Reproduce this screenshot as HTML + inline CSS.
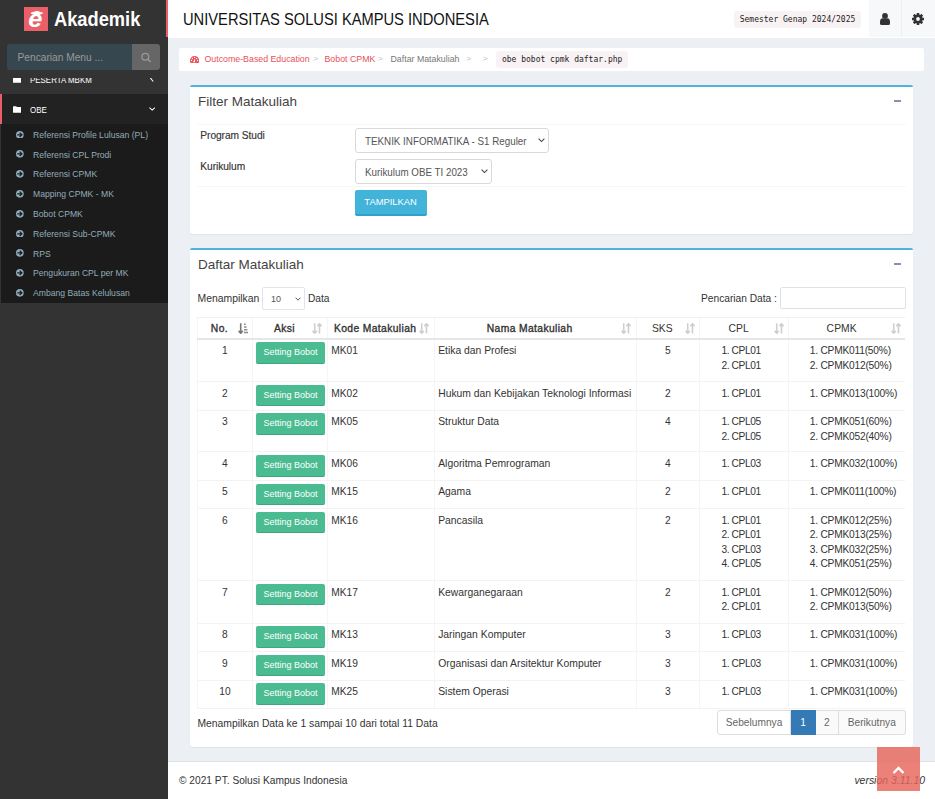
<!DOCTYPE html>
<html lang="id">
<head>
<meta charset="utf-8">
<title>Daftar Matakuliah</title>
<style>
*{box-sizing:border-box;margin:0;padding:0}
html,body{width:935px;height:799px;overflow:hidden}
body{font-family:"Liberation Sans",sans-serif;font-size:10.2px;color:#333;background:#ecf0f5;position:relative}
a{text-decoration:none;color:inherit}
/* sidebar */
#side{position:absolute;left:0;top:0;width:168px;height:799px;background:#333;overflow:hidden}
#logo{position:absolute;left:0;top:0;width:168px;height:37px;border-right:2px solid #e8606a}
#logo .sq{position:absolute;left:24px;top:6.5px}
#logo .nm{position:absolute;left:53.5px;top:6.2px;font-size:21px;font-weight:bold;color:#fff;line-height:26px;transform:scaleX(.87);transform-origin:0 0}
#srch{position:absolute;left:0;top:37px;width:168px;height:40.6px;background:#333;z-index:3}
#srch .in{position:absolute;left:7px;top:7px;width:125px;height:26px;background:#37474f;border-radius:3px 0 0 3px;color:#999;font-size:10.2px;line-height:28px;padding-left:10.5px}
#srch .bt{position:absolute;left:132px;top:7px;width:28px;height:26px;background:#666;border-radius:0 3px 3px 0}
#menu{position:absolute;left:0;top:64px;width:168px}
.mi{position:relative;height:30px;color:#fff;font-size:9px;line-height:32px;padding-left:30px;white-space:nowrap}
.mi span,.si span{display:inline-block;transform-origin:0 50%}
.mi span{transform:scaleX(.88)}
.mi .fo{position:absolute;left:12.7px;top:12px}
.mi .ch{position:absolute;left:149.5px;top:10.6px}
.mi.act .fo{left:10.7px}.mi.act .ch{left:146.8px;top:13.3px}
.mi.act{background:#222;border-left:2px solid #eb5f68;padding-left:28px}
.sub{background:#1b1b1b;padding:0.8px 0 0 0;height:179px;margin-left:1px}
.si{position:relative;height:19.8px;line-height:19.8px;color:#93acb8;font-size:9.8px;padding-left:31.5px;white-space:nowrap}
.si span{transform:scaleX(.88)}
.si .ar{position:absolute;left:15.2px;top:5.9px}
/* header */
#head{position:absolute;left:168px;top:0;width:767px;height:37.5px;background:#fff}
#head .tt{position:absolute;left:15px;top:0;line-height:39.8px;font-size:17px;transform:scaleX(.864);transform-origin:0 0;color:#111;white-space:nowrap}
#head .sem{position:absolute;left:566px;top:11px;width:127px;height:17px;background:#f9f2f4;border-radius:3px;font-family:"DejaVu Sans Mono","Liberation Mono",monospace;font-size:8px;line-height:18px;text-align:center;color:#222}
#head .c1{position:absolute;left:701px;top:0;width:33px;height:36.5px;background:#f7f8fa;border-right:1px solid #eef0f3}
#head .c2{position:absolute;left:734px;top:0;width:33px;height:36.5px;background:#f7f8fa}
#head .c1 svg{position:absolute;left:11px;top:13px}
#head .c2 svg{position:absolute;left:10px;top:12.9px}
/* breadcrumb */
#bc{position:absolute;left:179px;top:48px;width:745px;height:22.5px;background:#fff;border-radius:2px;font-size:8.8px;line-height:22px;white-space:nowrap}
#bc span{position:absolute;top:0}
#bc .r{color:#e8505b}#bc .g{color:#bbb;font-size:8px}#bc .k{color:#777}
#bc .db{position:absolute;left:10.9px;top:7.9px}
#bc code{position:absolute;left:317.3px;top:2.6px;width:131.7px;height:17px;background:#f9f2f4;border-radius:3px;font-family:"DejaVu Sans Mono","Liberation Mono",monospace;font-size:8px;line-height:17px;text-align:center;color:#222;white-space:pre}
/* panels */
.pn{position:absolute;left:190px;width:723px;background:#fff;border-radius:3px;box-shadow:0 1px 1px rgba(0,0,0,.06)}
.pn::before{content:"";position:absolute;left:0;right:0;top:0;height:2px;background:#4fb4dc;border-radius:3px 3px 0 0}
.pn h3{position:absolute;left:8px;top:8px;font-weight:normal;font-size:13.5px;line-height:18px;color:#444}
.pn .mn{position:absolute;right:11.6px;top:15.3px;width:7.4px;height:1.6px;background:#8790ad}
#p1{top:85px;height:149px}
#p2{top:248px;height:498.8px}
/* footer */
#foot{position:absolute;left:168px;top:761px;width:767px;height:38px;border-top:1px solid #dde1e8;background:#fff;font-size:10.2px;line-height:37px}

.ln{position:absolute;left:7px;right:7px;height:1px;background:#f7f7f7}
.lb{position:absolute;left:10.3px;font-size:10.2px;line-height:14px;color:#333;letter-spacing:-.05px;-webkit-text-stroke:.15px #333}
.lt{position:absolute;font-size:10.2px;line-height:21px;color:#333;white-space:nowrap}
.sel{position:absolute;height:24.6px;border:1px solid #d9d9d9;border-radius:3px;background:#fff;font-size:10.6px;line-height:24.4px;color:#555;padding-left:9.5px;white-space:nowrap}
.sel span{display:inline-block;transform:scaleX(.925);transform-origin:0 50%}
.sel .cv{position:absolute;right:3px;top:9.4px}
.sel.sm{height:23px;line-height:22px;font-size:9.7px;padding-left:7.5px;border-color:#e3e3ee;border-radius:2px}
.sel.sm .cv{top:8.6px;right:3px}
.inp{position:absolute;border:1px solid #dfe0ea;border-radius:2px;background:#fff}
.btn{position:absolute;width:72.2px;height:25.6px;background:#42b3d9;border-bottom:2px solid #2fa2c9;border-radius:2px;color:#fff;font-size:9.4px;line-height:24.6px;text-align:center}
#tb{position:absolute;left:6.7px;top:68.8px;width:708.5px;border-top:1px solid #f0f0f0}
.tr{display:flex;border-bottom:1px solid #f3f3f3}
.td{border-left:1px solid #f5f5f5;padding:4.5px 3.5px 0 3.5px;line-height:14.55px;font-size:10.2px;color:#333;white-space:nowrap;overflow:hidden;flex:none}
.tr .td:last-child{border-right:0}
.w1{width:55.5px}.w2{width:74.5px}.w3{width:107px}.w4{width:202px;font-size:10.35px}.w5{width:63.3px}.w6{width:89.2px}.w7{width:117px}
.td.c{text-align:center}
.td.b{padding:2.7px 0 0 2.8px}
.td.l1{padding-left:21.5px;letter-spacing:-.4px}
.td.l2{padding-left:20.5px;letter-spacing:-.2px}
.th{height:21.9px;border-bottom:2px solid #e6e6e6}
.th .td{position:relative;text-align:center;font-weight:normal;-webkit-text-stroke:.35px #333;color:#333;padding:4px 14px 0 3px;font-size:10.3px;letter-spacing:.38px}
.th .td.n{-webkit-text-stroke:0;letter-spacing:.1px}
.th .so{position:absolute;right:3.9px;top:4.9px;width:10.4px;height:11.4px}
.sb{display:block;width:69px;height:21.5px;background:#4bbb92;border-bottom:1.5px solid #3ca77f;border-radius:2px;color:#fff;font-size:9px;line-height:21px;text-align:center}
#pg{position:absolute;left:527px;top:462.2px;height:24.4px;width:189px;display:flex;font-size:10.2px;line-height:23.6px;color:#666;text-align:center}
#pg a{border:1px solid #ddd;border-left-width:0;height:24.4px;background:#fafafa}
#pg .p0{width:74px;border-left-width:1px;border-radius:3px 0 0 3px;background:#fff}
#pg .p1{width:25px;background:#337ab7;border-color:#337ab7;color:#fff}
#pg .p2{width:22.5px}
#pg .p3{width:67.5px;border-radius:0 3px 3px 0}
#foot .ver{position:absolute;right:10px;top:0;font-style:italic;color:#333;font-size:10.45px}
#top{position:absolute;left:877px;top:747.3px;width:43.2px;height:43.6px;background:rgba(231,101,92,.82);z-index:9}
#top svg{position:absolute;left:15.2px;top:18.6px}
</style>
</head>
<body>
<div id="side">
  <div id="menu">
    <div class="mi"><svg class="fo" viewBox="0 0 9 7" width="8.6" height="7"><path d="M0 0.7Q0 0 .7 0H3.2L4.2 1H8.3Q9 1 9 1.7V6.3Q9 7 8.3 7H.7Q0 7 0 6.3Z" fill="#fff"/></svg><span>PESERTA MBKM</span><svg class="ch" viewBox="0 0 4 7" width="4" height="7"><path d="M3.3 0.5L0.7 3.5L3.3 6.5" fill="none" stroke="#fff" stroke-width="1.1"/></svg></div>
    <div class="mi act"><svg class="fo" viewBox="0 0 9 7" width="8.6" height="7"><path d="M0 0.7Q0 0 .7 0H3.2L4.2 1H8.3Q9 1 9 1.7V6.3Q9 7 8.3 7H.7Q0 7 0 6.3Z" fill="#fff"/></svg><span>OBE</span><svg class="ch" viewBox="0 0 7 4" width="6.4" height="3.8"><path d="M0.5 0.6L3.5 3.3L6.5 0.6" fill="none" stroke="#fff" stroke-width="1.1"/></svg></div>
    <div class="sub">
      <div class="si"><svg class="ar" viewBox="0 0 8 8" width="7.7" height="7.7"><circle cx="4" cy="4" r="4" fill="#8fadbb"/><path d="M1.3 4H6M3.8 1.7L6.2 4L3.8 6.3" fill="none" stroke="#1b1b1b" stroke-width="1.25"/></svg><span>Referensi Profile Lulusan (PL)</span></div>
      <div class="si"><svg class="ar" viewBox="0 0 8 8" width="7.7" height="7.7"><circle cx="4" cy="4" r="4" fill="#8fadbb"/><path d="M1.3 4H6M3.8 1.7L6.2 4L3.8 6.3" fill="none" stroke="#1b1b1b" stroke-width="1.25"/></svg><span>Referensi CPL Prodi</span></div>
      <div class="si"><svg class="ar" viewBox="0 0 8 8" width="7.7" height="7.7"><circle cx="4" cy="4" r="4" fill="#8fadbb"/><path d="M1.3 4H6M3.8 1.7L6.2 4L3.8 6.3" fill="none" stroke="#1b1b1b" stroke-width="1.25"/></svg><span>Referensi CPMK</span></div>
      <div class="si"><svg class="ar" viewBox="0 0 8 8" width="7.7" height="7.7"><circle cx="4" cy="4" r="4" fill="#8fadbb"/><path d="M1.3 4H6M3.8 1.7L6.2 4L3.8 6.3" fill="none" stroke="#1b1b1b" stroke-width="1.25"/></svg><span>Mapping CPMK - MK</span></div>
      <div class="si"><svg class="ar" viewBox="0 0 8 8" width="7.7" height="7.7"><circle cx="4" cy="4" r="4" fill="#8fadbb"/><path d="M1.3 4H6M3.8 1.7L6.2 4L3.8 6.3" fill="none" stroke="#1b1b1b" stroke-width="1.25"/></svg><span>Bobot CPMK</span></div>
      <div class="si"><svg class="ar" viewBox="0 0 8 8" width="7.7" height="7.7"><circle cx="4" cy="4" r="4" fill="#8fadbb"/><path d="M1.3 4H6M3.8 1.7L6.2 4L3.8 6.3" fill="none" stroke="#1b1b1b" stroke-width="1.25"/></svg><span>Referensi Sub-CPMK</span></div>
      <div class="si"><svg class="ar" viewBox="0 0 8 8" width="7.7" height="7.7"><circle cx="4" cy="4" r="4" fill="#8fadbb"/><path d="M1.3 4H6M3.8 1.7L6.2 4L3.8 6.3" fill="none" stroke="#1b1b1b" stroke-width="1.25"/></svg><span>RPS</span></div>
      <div class="si"><svg class="ar" viewBox="0 0 8 8" width="7.7" height="7.7"><circle cx="4" cy="4" r="4" fill="#8fadbb"/><path d="M1.3 4H6M3.8 1.7L6.2 4L3.8 6.3" fill="none" stroke="#1b1b1b" stroke-width="1.25"/></svg><span>Pengukuran CPL per MK</span></div>
      <div class="si"><svg class="ar" viewBox="0 0 8 8" width="7.7" height="7.7"><circle cx="4" cy="4" r="4" fill="#8fadbb"/><path d="M1.3 4H6M3.8 1.7L6.2 4L3.8 6.3" fill="none" stroke="#1b1b1b" stroke-width="1.25"/></svg><span>Ambang Batas Kelulusan</span></div>
    </div>
  </div>
  <div id="srch"><div class="in">Pencarian Menu ...</div><div class="bt"><svg viewBox="0 0 28 26" width="28" height="26"><circle cx="13.3" cy="12.8" r="3.4" fill="none" stroke="#999" stroke-width="1.3"/><path d="M15.8 15.3L18.8 18" stroke="#999" stroke-width="1.4" fill="none"/></svg></div></div>
  <div id="logo"><svg class="sq" viewBox="0 0 24 24" width="24" height="24"><rect width="24" height="24" fill="#eb5f68"/><text x="4.4" y="19.6" font-family="Liberation Sans, sans-serif" font-weight="bold" font-style="italic" font-size="23.5" fill="#fff" transform="translate(5 0) scale(1.08 1) translate(-5 0)">e</text><path d="M7 6.2L13 4.3L18.6 6.2L13 8.2Z" fill="#fff" stroke="#fff" stroke-width="1" stroke-linejoin="round"/></svg><div class="nm">Akademik</div></div>
</div>
<div id="head">
  <div class="tt">UNIVERSITAS SOLUSI KAMPUS INDONESIA</div>
  <div class="sem">Semester Genap 2024/2025</div>
  <div class="c1"><svg viewBox="0 0 10 12" width="10" height="12"><circle cx="5" cy="3" r="2.9" fill="#333"/><path d="M0 9Q0 5.2 2.6 5.2Q5 6.8 7.4 5.2Q10 5.2 10 9V10.4Q10 12 8.4 12H1.6Q0 12 0 10.4Z" fill="#333"/></svg></div><div class="c2"><svg viewBox="-6 -6 12 12" width="12" height="12"><g fill="#333"><circle r="4.6"/><rect x="-1.3" y="-6" width="2.6" height="12" rx=".3"/><rect x="-1.3" y="-6" width="2.6" height="12" rx=".3" transform="rotate(45)"/><rect x="-1.3" y="-6" width="2.6" height="12" rx=".3" transform="rotate(90)"/><rect x="-1.3" y="-6" width="2.6" height="12" rx=".3" transform="rotate(135)"/></g><circle r="1.9" fill="#f7f8fa"/></svg></div>
</div>
<div id="bc"><svg class="db" viewBox="0 0 10 7.8" width="9.2" height="7.2"><path d="M5 0A5 4.9 0 0 0 0 4.9Q0 6.6 .8 7.8H9.2Q10 6.6 10 4.9A5 4.9 0 0 0 5 0Z" fill="#e8505b"/><path d="M4.6 6.6L5.3 3.4" stroke="#fff" stroke-width="1"/><circle cx="4.6" cy="6.1" r="1.05" fill="#fff"/><circle cx="1.7" cy="4.9" r=".7" fill="#fff"/><circle cx="2.6" cy="2.7" r=".7" fill="#fff"/><circle cx="5" cy="1.6" r=".7" fill="#fff"/><circle cx="7.3" cy="2.7" r=".7" fill="#fff"/><circle cx="8.3" cy="4.9" r=".7" fill="#fff"/></svg><span class="r" style="left:25.5px">Outcome-Based Education</span><span class="g" style="left:134.5px">&gt;</span><span class="r" style="left:145.5px">Bobot CPMK</span><span class="g" style="left:199px">&gt;</span><span class="k" style="left:211.5px">Daftar Matakuliah</span><span class="g" style="left:287.5px">&gt;</span><span class="g" style="left:304px">&gt;</span><code>obe bobot cpmk daftar.php</code></div>
<div class="pn" id="p1"><h3>Filter Matakuliah</h3><div class="mn"></div>
<div class="ln" style="top:39px"></div><div class="ln" style="top:101px"></div>
<div class="lb" style="top:44.1px">Program Studi</div>
<div class="lb" style="top:75.1px">Kurikulum</div>
<div class="sel" style="left:164.5px;top:43px;width:194.3px"><span>TEKNIK INFORMATIKA - S1 Reguler</span><svg class="cv" viewBox="0 0 8 5" width="7" height="4.5"><path d="M0.7 0.7L4 4L7.3 0.7" fill="none" stroke="#444" stroke-width="1.2"/></svg></div>
<div class="sel" style="left:164.5px;top:74px;width:137.3px"><span>Kurikulum OBE TI 2023</span><svg class="cv" viewBox="0 0 8 5" width="7" height="4.5"><path d="M0.7 0.7L4 4L7.3 0.7" fill="none" stroke="#444" stroke-width="1.2"/></svg></div>
<a class="btn" style="left:164.5px;top:105px">TAMPILKAN</a></div>
<div class="pn" id="p2"><h3>Daftar Matakuliah</h3><div class="mn"></div>
<div class="lt" style="left:7.5px;top:39.6px;font-size:10.4px">Menampilkan</div>
<div class="sel sm" style="left:72.2px;top:39px;width:43px"><span>10</span><svg class="cv" viewBox="0 0 8 5" width="6" height="4"><path d="M0.7 0.7L4 4L7.3 0.7" fill="none" stroke="#444" stroke-width="1.2"/></svg></div>
<div class="lt" style="left:118px;top:40px">Data</div>
<div class="lt" style="left:511px;top:40px">Pencarian Data :</div>
<div class="inp" style="left:590px;top:39px;width:126px;height:22px"></div>
<div id="tb">
<div class="tr th"><div class="td w1">No.<svg class="so" viewBox="0 0 10 11" width="10" height="11"><path d="M2.6 0.3V9.8M0.6 7.6L2.6 9.9L4.6 7.6" fill="none" stroke="#777" stroke-width="1.55"/><path d="M5.8 1.2h1.6M5.8 3.9h2.4M5.8 6.5h3.2M5.8 9.2h4" fill="none" stroke="#8a8a8a" stroke-width="1.4"/></svg></div><div class="td w2">Aksi<svg class="so" viewBox="0 0 10 11" width="10" height="11"><path d="M2.6 0.3V9.8M0.6 7.6L2.6 9.9L4.6 7.6M7.2 10.2V0.8M5.2 3L7.2 0.7L9.2 3" fill="none" stroke="#cfcfcf" stroke-width="1.55"/></svg></div><div class="td w3">Kode Matakuliah<svg class="so" viewBox="0 0 10 11" width="10" height="11"><path d="M2.6 0.3V9.8M0.6 7.6L2.6 9.9L4.6 7.6M7.2 10.2V0.8M5.2 3L7.2 0.7L9.2 3" fill="none" stroke="#cfcfcf" stroke-width="1.55"/></svg></div><div class="td w4">Nama Matakuliah<svg class="so" viewBox="0 0 10 11" width="10" height="11"><path d="M2.6 0.3V9.8M0.6 7.6L2.6 9.9L4.6 7.6M7.2 10.2V0.8M5.2 3L7.2 0.7L9.2 3" fill="none" stroke="#cfcfcf" stroke-width="1.55"/></svg></div><div class="td w5 n">SKS<svg class="so" viewBox="0 0 10 11" width="10" height="11"><path d="M2.6 0.3V9.8M0.6 7.6L2.6 9.9L4.6 7.6M7.2 10.2V0.8M5.2 3L7.2 0.7L9.2 3" fill="none" stroke="#cfcfcf" stroke-width="1.55"/></svg></div><div class="td w6 n">CPL<svg class="so" viewBox="0 0 10 11" width="10" height="11"><path d="M2.6 0.3V9.8M0.6 7.6L2.6 9.9L4.6 7.6M7.2 10.2V0.8M5.2 3L7.2 0.7L9.2 3" fill="none" stroke="#cfcfcf" stroke-width="1.55"/></svg></div><div class="td w7 n">CPMK<svg class="so" viewBox="0 0 10 11" width="10" height="11"><path d="M2.6 0.3V9.8M0.6 7.6L2.6 9.9L4.6 7.6M7.2 10.2V0.8M5.2 3L7.2 0.7L9.2 3" fill="none" stroke="#cfcfcf" stroke-width="1.55"/></svg></div></div>
<div class="tr" style="height:42.6px"><div class="td w1 c">1</div><div class="td w2 b"><a class="sb">Setting Bobot</a></div><div class="td w3">MK01</div><div class="td w4">Etika dan Profesi</div><div class="td w5 c">5</div><div class="td w6 l1">1. CPL01<br>2. CPL01</div><div class="td w7 l2">1. CPMK011(50%)<br>2. CPMK012(50%)</div></div>
<div class="tr" style="height:28.4px"><div class="td w1 c">2</div><div class="td w2 b"><a class="sb">Setting Bobot</a></div><div class="td w3">MK02</div><div class="td w4">Hukum dan Kebijakan Teknologi Informasi</div><div class="td w5 c">2</div><div class="td w6 l1">1. CPL01</div><div class="td w7 l2">1. CPMK013(100%)</div></div>
<div class="tr" style="height:41.8px"><div class="td w1 c">3</div><div class="td w2 b"><a class="sb">Setting Bobot</a></div><div class="td w3">MK05</div><div class="td w4">Struktur Data</div><div class="td w5 c">4</div><div class="td w6 l1">1. CPL05<br>2. CPL05</div><div class="td w7 l2">1. CPMK051(60%)<br>2. CPMK052(40%)</div></div>
<div class="tr" style="height:28.4px"><div class="td w1 c">4</div><div class="td w2 b"><a class="sb">Setting Bobot</a></div><div class="td w3">MK06</div><div class="td w4">Algoritma Pemrograman</div><div class="td w5 c">4</div><div class="td w6 l1">1. CPL03</div><div class="td w7 l2">1. CPMK032(100%)</div></div>
<div class="tr" style="height:28.4px"><div class="td w1 c">5</div><div class="td w2 b"><a class="sb">Setting Bobot</a></div><div class="td w3">MK15</div><div class="td w4">Agama</div><div class="td w5 c">2</div><div class="td w6 l1">1. CPL01</div><div class="td w7 l2">1. CPMK011(100%)</div></div>
<div class="tr" style="height:71.9px"><div class="td w1 c">6</div><div class="td w2 b"><a class="sb">Setting Bobot</a></div><div class="td w3">MK16</div><div class="td w4">Pancasila</div><div class="td w5 c">2</div><div class="td w6 l1">1. CPL01<br>2. CPL01<br>3. CPL03<br>4. CPL05</div><div class="td w7 l2">1. CPMK012(25%)<br>2. CPMK013(25%)<br>3. CPMK032(25%)<br>4. CPMK051(25%)</div></div>
<div class="tr" style="height:42.5px"><div class="td w1 c">7</div><div class="td w2 b"><a class="sb">Setting Bobot</a></div><div class="td w3">MK17</div><div class="td w4">Kewarganegaraan</div><div class="td w5 c">2</div><div class="td w6 l1">1. CPL01<br>2. CPL01</div><div class="td w7 l2">1. CPMK012(50%)<br>2. CPMK013(50%)</div></div>
<div class="tr" style="height:28.6px"><div class="td w1 c">8</div><div class="td w2 b"><a class="sb">Setting Bobot</a></div><div class="td w3">MK13</div><div class="td w4">Jaringan Komputer</div><div class="td w5 c">3</div><div class="td w6 l1">1. CPL03</div><div class="td w7 l2">1. CPMK031(100%)</div></div>
<div class="tr" style="height:28.3px"><div class="td w1 c">9</div><div class="td w2 b"><a class="sb">Setting Bobot</a></div><div class="td w3">MK19</div><div class="td w4">Organisasi dan Arsitektur Komputer</div><div class="td w5 c">3</div><div class="td w6 l1">1. CPL03</div><div class="td w7 l2">1. CPMK031(100%)</div></div>
<div class="tr" style="height:28.2px"><div class="td w1 c">10</div><div class="td w2 b"><a class="sb">Setting Bobot</a></div><div class="td w3">MK25</div><div class="td w4">Sistem Operasi</div><div class="td w5 c">3</div><div class="td w6 l1">1. CPL03</div><div class="td w7 l2">1. CPMK031(100%)</div></div>
</div>
<div class="lt" style="left:7.5px;top:465px;font-size:10.35px">Menampilkan Data ke 1 sampai 10 dari total 11 Data</div>
<div id="pg"><a class="p0">Sebelumnya</a><a class="p1">1</a><a class="p2">2</a><a class="p3">Berikutnya</a></div></div>
<div id="foot"><span style="margin-left:11px">© 2021 PT. Solusi Kampus Indonesia</span><span class="ver">version 3.11.10</span></div>
<div id="top"><svg viewBox="0 0 13 8" width="13" height="8"><path d="M1.5 7L6.5 2L11.5 7" fill="none" stroke="#fff" stroke-width="2.4"/></svg></div>
</body>
</html>
